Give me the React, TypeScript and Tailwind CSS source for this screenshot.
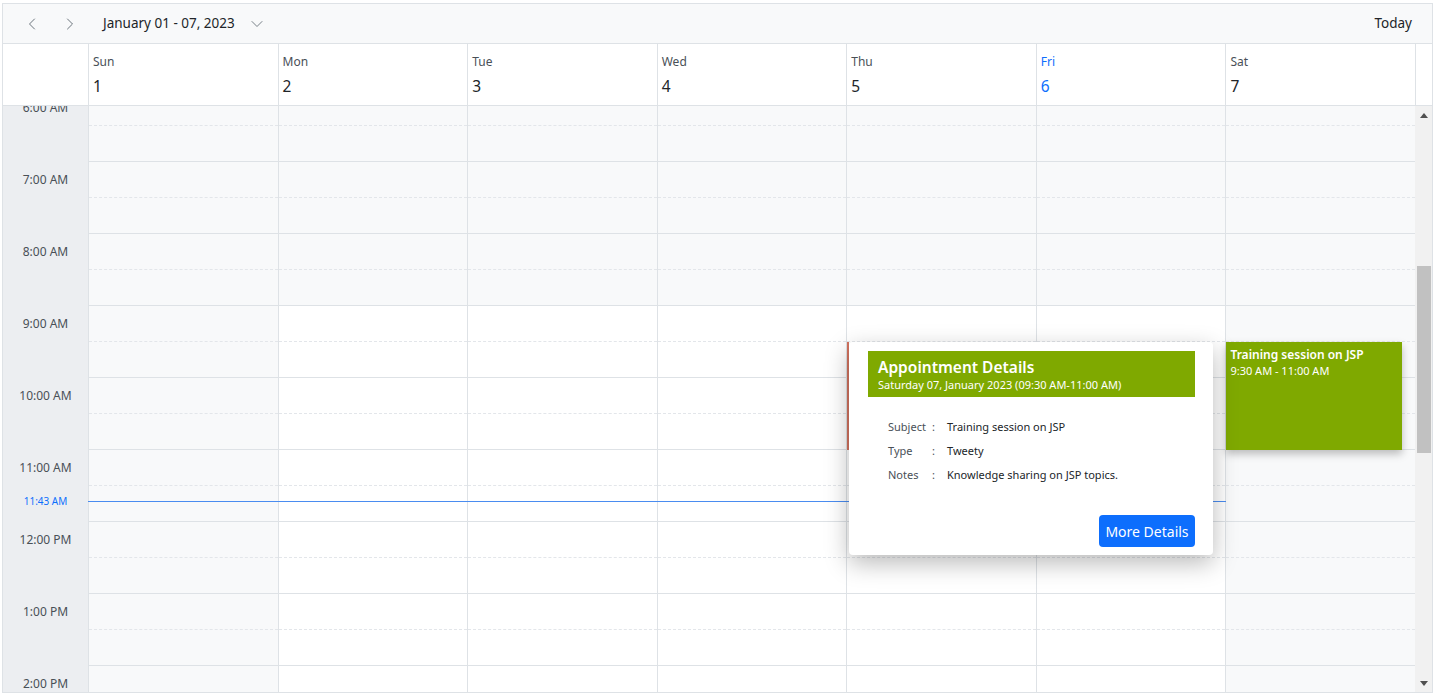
import React from "react";
import { ChevronLeft, ChevronRight, ChevronDown } from "lucide-react";

const days = [
  { n: "Sun", d: 1, weekend: true },
  { n: "Mon", d: 2 },
  { n: "Tue", d: 3 },
  { n: "Wed", d: 4 },
  { n: "Thu", d: 5 },
  { n: "Fri", d: 6, today: true },
  { n: "Sat", d: 7, weekend: true },
];

const hours = [
  { h: 6, l: "6:00 AM" },
  { h: 7, l: "7:00 AM" },
  { h: 8, l: "8:00 AM" },
  { h: 9, l: "9:00 AM" },
  { h: 10, l: "10:00 AM" },
  { h: 11, l: "11:00 AM" },
  { h: 12, l: "12:00 PM" },
  { h: 13, l: "1:00 PM" },
  { h: 14, l: "2:00 PM" },
];

function DayColumn({ day, idx }: { day: (typeof days)[number]; idx: number }) {
  return (
    <div className="relative border-l border-[#dee2e6]">
      {hours.map((hr) => {
        const work = !day.weekend && hr.h >= 9 && hr.h < 18;
        return (
          <div key={hr.h} className={work ? "bg-white" : "bg-[#f8f9fa]"}>
            <div className="h-[36px] border-b border-dashed border-[#e3e6ea]" />
            <div className="h-[36px] border-b border-[#dee2e6]" />
          </div>
        );
      })}
      {idx === 4 && (
        <div className="absolute left-0 top-[252px] h-[108px] w-[180px] border-l-2 border-[#d2735f] bg-white" />
      )}
      {idx === 6 && (
        <div className="absolute left-0 top-[252px] h-[108px] w-[176px] bg-[#7fa900] px-[4px] pt-[4px] text-white shadow-[0_4px_8px_rgba(0,0,0,0.25)]">
          <div className="text-[12px] font-semibold leading-[18px]">Training session on JSP</div>
          <div className="text-[11px] leading-[14px]">9:30 AM - 11:00 AM</div>
        </div>
      )}
    </div>
  );
}

export default function App() {
  return (
    <div className="relative h-[697px] w-[1436px] overflow-hidden bg-white font-['Noto_Sans',sans-serif] text-[#212529]">
      <div className="ml-[2px] mt-[3px] flex h-[690px] w-[1431px] flex-col border border-[#dee2e6]">
        {/* toolbar */}
        <div className="flex h-[40px] shrink-0 items-center border-b border-[#dee2e6] bg-[#f8f9fa] pr-[20px]">
          <button className="ml-[17px] flex h-[24px] w-[24px] items-center justify-center text-[#6c757d]">
            <ChevronLeft size={20} strokeWidth={1.2} />
          </button>
          <button className="ml-[14px] flex h-[24px] w-[24px] items-center justify-center text-[#6c757d]">
            <ChevronRight size={20} strokeWidth={1.2} />
          </button>
          <div className="ml-[21px] flex items-center text-[13.5px] text-[#212529]">
            <span>January 01 - 07, 2023</span>
            <ChevronDown size={20} strokeWidth={1.1} className="ml-[12px] text-[#6c757d]" />
          </div>
          <div className="ml-auto text-[13.5px] text-[#212529]">Today</div>
        </div>
        {/* header */}
        <div className="flex h-[62px] shrink-0 border-b border-[#dee2e6]">
          <div className="w-[85px] shrink-0" />
          <div className="grid flex-1 grid-cols-7">
            {days.map((d) => (
              <div key={d.n} className="border-l border-[#dee2e6] pl-[4px] pt-[10px]">
                <div className={`text-[12px] leading-[16px] ${d.today ? "text-[#0d6efd]" : "text-[#495057]"}`}>{d.n}</div>
                <div className={`mt-[6px] text-[15.5px] leading-[20px] ${d.today ? "text-[#0d6efd]" : "text-[#212529]"}`}>{d.d}</div>
              </div>
            ))}
          </div>
          <div className="w-[17px] shrink-0 border-l border-[#dee2e6]" />
        </div>
        {/* content */}
        <div className="flex min-h-0 flex-1">
          <div className="relative flex-1 overflow-hidden">
            <div className="-mt-[16px] flex">
              <div className="relative w-[85px] shrink-0 bg-[#eceef1]">
                {hours.map((hr) => (
                  <div key={hr.h} className="h-[72px]">
                    <div className="flex h-[36px] items-center justify-center text-[12px] text-[#495057]">{hr.l}</div>
                  </div>
                ))}
                <div className="absolute left-0 top-[404px] w-full text-center text-[10px] leading-[14px] text-[#0d6efd]">11:43 AM</div>
              </div>
              <div className="relative grid flex-1 grid-cols-7">
                {days.map((d, i) => (
                  <DayColumn key={d.n} day={d} idx={i} />
                ))}
                <div className="absolute left-0 top-[411px] h-px w-[85.72%] bg-[#4a8cf0]" />
              </div>
            </div>
          </div>
          {/* scrollbar */}
          <div className="relative flex w-[17px] shrink-0 flex-col items-center bg-[#f1f1f1]">
            <div className="mt-[7px] h-0 w-0 border-x-[4px] border-b-[5px] border-x-transparent border-b-[#505050]" />
            <div className="mt-[148px] h-[187px] w-[14px] bg-[#c1c1c1]" />
            <div className="mt-auto mb-[6px] h-0 w-0 border-x-[4px] border-t-[5px] border-x-transparent border-t-[#505050]" />
          </div>
        </div>
      </div>

      {/* popup */}
      <div className="absolute left-[849px] top-[342px] h-[213px] w-[364px] rounded-[4px] bg-white px-[18px] pt-[9px] shadow-[0_8px_24px_rgba(0,0,0,0.28)]">
        <div className="ml-[1px] h-[46px] bg-[#7fa900] px-[10px] pt-[6px] text-white">
          <div className="text-[15.5px] font-semibold leading-[20px]">Appointment Details</div>
          <div className="text-[11px] leading-[16px]">Saturday 07, January 2023 (09:30 AM-11:00 AM)</div>
        </div>
        <div className="mt-[18px] pl-[21px] text-[11px] leading-[24px]">
          {[
            ["Subject", "Training session on JSP"],
            ["Type", "Tweety"],
            ["Notes", "Knowledge sharing on JSP topics."],
          ].map(([k, v]) => (
            <div key={k} className="flex">
              <span className="w-[44px] text-[#495057]">{k}</span>
              <span className="w-[15px] text-[#495057]">:</span>
              <span className="text-[#212529]">{v}</span>
            </div>
          ))}
        </div>
        <div className="mt-[28px] flex justify-end">
          <button className="h-[32px] w-[96px] rounded-[4px] bg-[#0d6efd] text-[14px] text-white">More Details</button>
        </div>
      </div>
    </div>
  );
}
